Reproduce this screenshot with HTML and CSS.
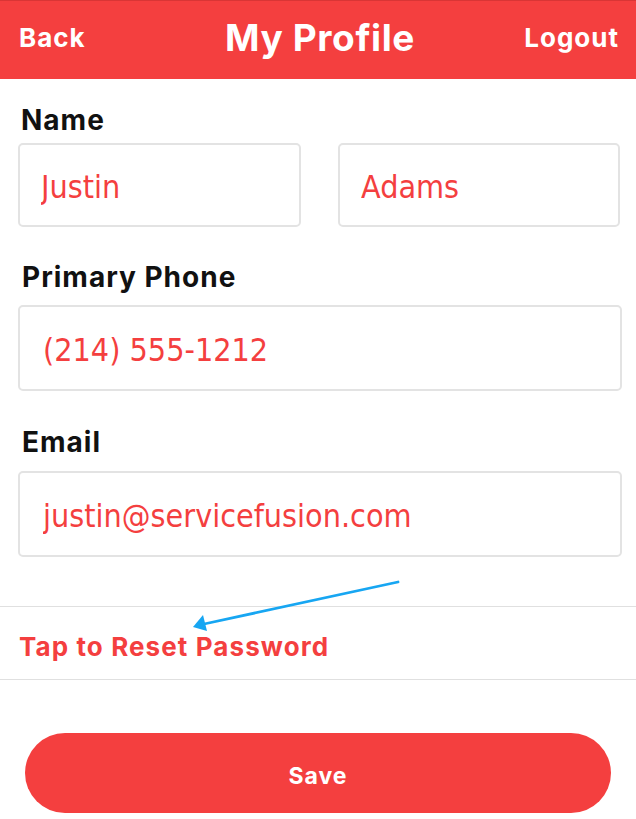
FILE: index.html
```html
<!DOCTYPE html>
<html lang="en">
<head>
<meta charset="utf-8">
<title>My Profile</title>
<link rel="stylesheet" href="styles.css">
</head>
<body>
<div class="screen">
  <header class="topbar">
    <span class="nav-link nav-back">Back</span>
    <h1 class="title">My Profile</h1>
    <span class="nav-link nav-logout">Logout</span>
  </header>

  <main class="form">
    <section class="field">
      <div class="label label-name">Name</div>
      <div class="row">
        <input class="box box-half" type="text" value="Justin">
        <input class="box box-half box-last" type="text" value="Adams">
      </div>
    </section>

    <section class="field">
      <div class="label label-phone">Primary Phone</div>
      <input class="box box-full" type="text" value="(214) 555-1212">
    </section>

    <section class="field">
      <div class="label label-email">Email</div>
      <input class="box box-full" type="text" value="justin@servicefusion.com">
    </section>
  </main>

  <div class="reset">
    <span class="reset-link">Tap to Reset Password</span>
  </div>

  <div class="actions">
    <button class="save" type="button">Save</button>
  </div>

  <svg class="annotation" width="636" height="819" viewBox="0 0 636 819" aria-hidden="true">
    <line x1="398" y1="582" x2="204" y2="624" stroke="#17a6f2" stroke-width="2.8" stroke-linecap="round"/>
    <polygon points="193,627 203,615 207,631" fill="#17a6f2"/>
  </svg>
</div>
</body>
</html>
```

FILE: styles.css
```css
* {
  box-sizing: border-box;
}

html, body {
  margin: 0;
  padding: 0;
  background: #ffffff;
}

body {
  font-family: "Inter", "Lato", "Liberation Sans", sans-serif;
}

.screen {
  position: relative;
  width: 636px;
  height: 819px;
  overflow: hidden;
  background: #ffffff;
}

.topbar {
  height: 79px;
  background: #f43f3f;
  border-top: 1px solid #d93535;
  display: grid;
  grid-template-columns: 1fr auto 1fr;
  align-items: center;
  padding: 0 17px 6px 19px;
  color: #ffffff;
}

.nav-link {
  font-size: 26px;
  font-weight: 700;
  line-height: 1;
  letter-spacing: 1px;
  padding-top: 2px;
}

.nav-back {
  justify-self: start;
}

.nav-logout {
  justify-self: end;
}

.title {
  margin: 0 0 0 2px;
  font-size: 37px;
  font-weight: 700;
  line-height: 1;
  letter-spacing: 0.6px;
}

.form {
  padding: 0 14px 0 18px;
}

.label {
  font-size: 28px;
  font-weight: 700;
  color: #111111;
  line-height: 34px;
  letter-spacing: 1px;
  padding-left: 3px;
}

.label-name {
  margin-top: 24px;
  margin-bottom: 6px;
}

.label-phone {
  margin-top: 33px;
  margin-bottom: 11px;
  padding-left: 4px;
}

.label-email {
  margin-top: 34px;
  margin-bottom: 12px;
  padding-left: 4px;
}

.row {
  display: flex;
  gap: 37px;
  padding-right: 3px;
}

.box {
  display: block;
  height: 84px;
  border: 2px solid #e3e3e3;
  border-radius: 5px;
  background: #ffffff;
  color: #f43f3f;
  font-family: "DejaVu Sans Condensed", "DejaVu Sans", sans-serif;
  font-size: 32px;
  padding: 4px 0 0 21px;
  outline: none;
  margin: 0;
}

.box-half {
  width: 283px;
}

.box-last {
  width: 282px;
}

.box-full {
  width: 604px;
  height: 86px;
  padding-left: 23px;
}

.reset {
  margin-top: 49px;
  border-top: 1px solid #e0e0e0;
  border-bottom: 1px solid #e0e0e0;
  height: 74px;
  display: flex;
  align-items: center;
  padding: 6px 0 0 19px;
}

.reset-link {
  color: #f43f3f;
  font-size: 26px;
  font-weight: 700;
  letter-spacing: 1.1px;
}

.actions {
  padding: 53px 25px 0 25px;
}

.save {
  display: block;
  width: 586px;
  height: 80px;
  border: none;
  border-radius: 40px;
  background: #f43f3f;
  color: #ffffff;
  font-family: "Inter", "Lato", "Liberation Sans", sans-serif;
  font-size: 23px;
  font-weight: 700;
  letter-spacing: 1px;
  padding: 6px 0 0 0;
}

.annotation {
  position: absolute;
  left: 0;
  top: 0;
  pointer-events: none;
}
```
